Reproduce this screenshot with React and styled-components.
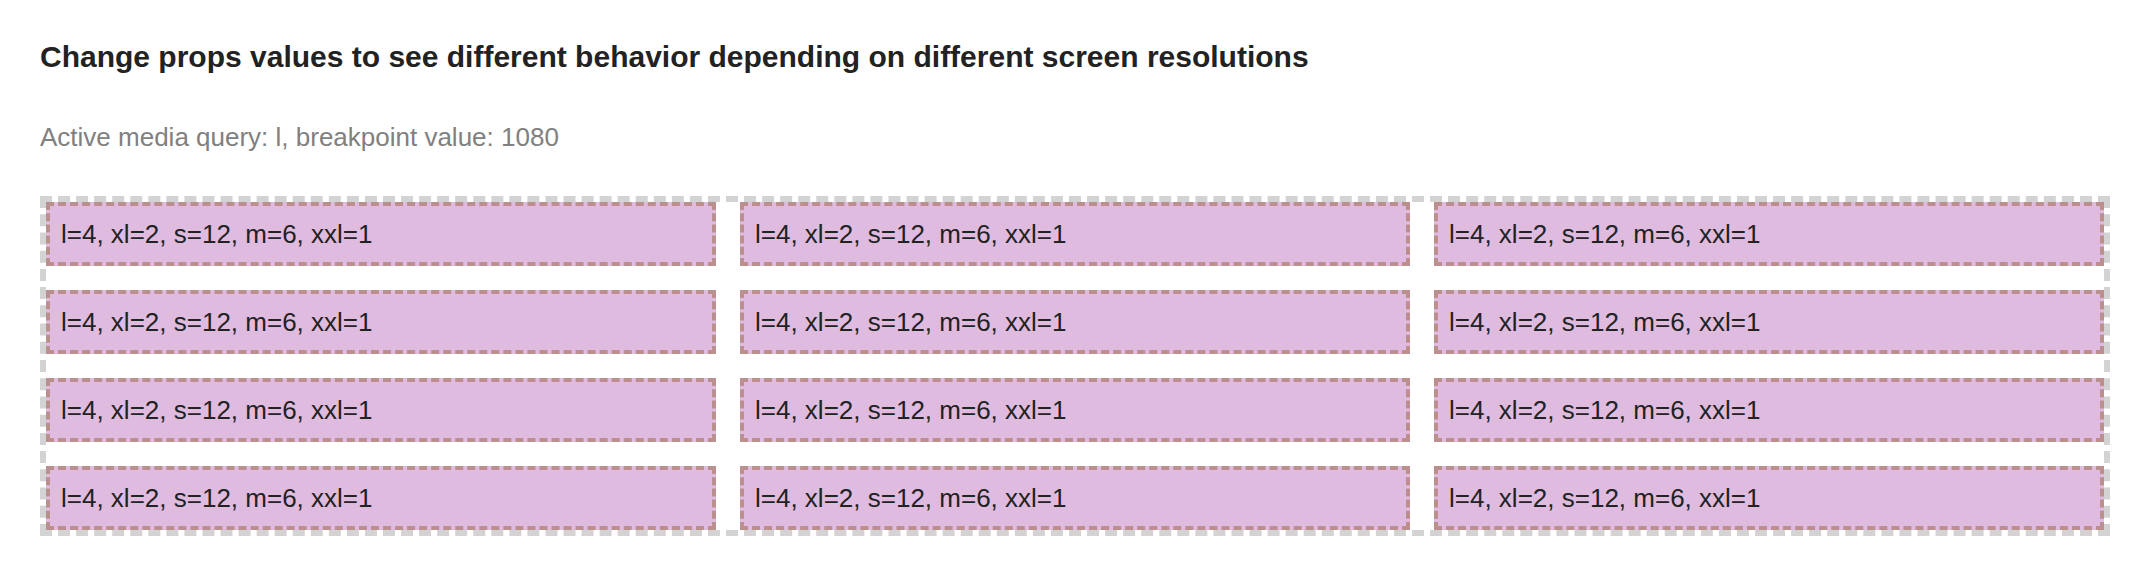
import React from "react";
import styled, { createGlobalStyle } from "styled-components";

const GlobalStyle = createGlobalStyle`
  html, body {
    margin: 0;
    padding: 0;
    background: #ffffff;
  }
  body {
    font-family: "Liberation Sans", Arial, sans-serif;
  }
`;

const Page = styled.div`
  display: flex;
  flex-direction: column;
  padding: 0 28px 0 40px;
`;

const Title = styled.h2`
  margin: 39px 0 0;
  font-size: 30px;
  line-height: 36px;
  font-weight: 700;
  color: #222222;
`;

const Info = styled.p`
  margin: 43px 0 0;
  font-size: 26px;
  line-height: 38px;
  color: #808080;
`;

const Grid = styled.div`
  margin-top: 40px;
  display: grid;
  grid-template-columns: repeat(${(p) => p.cols}, 1fr);
  gap: 24px;
  border: 6px dashed #d3d3d3;
`;

const Cell = styled.div`
  box-sizing: border-box;
  height: 64px;
  display: flex;
  align-items: center;
  padding: 0 10px 0 11px;
  background: #dfbcdf;
  border: 4px dashed #bc8f8f;
  font-size: 26px;
  color: #222222;
`;

const cells = Array.from({ length: 12 }, (_, i) => i);

export default function App() {
  return (
    <>
      <GlobalStyle />
      <Page>
        <Title>
          Change props values to see different behavior depending on different
          screen resolutions
        </Title>
        <Info>Active media query: l, breakpoint value: 1080</Info>
        <Grid cols={3}>
          {cells.map((i) => (
            <Cell key={i}>l=4, xl=2, s=12, m=6, xxl=1</Cell>
          ))}
        </Grid>
      </Page>
    </>
  );
}
